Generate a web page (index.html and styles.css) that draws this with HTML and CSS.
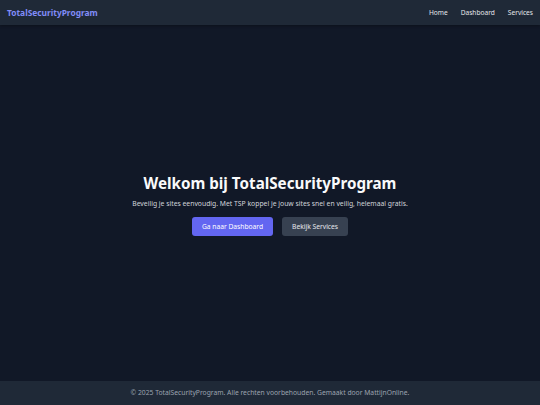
FILE: index.html
```html
<!DOCTYPE html>
<html lang="nl">
<head>
  <meta charset="UTF-8" />
  <meta name="viewport" content="width=device-width, initial-scale=1.0"/>
  <title>TotalSecurityProgram</title>
  <link rel="stylesheet" href="styles.css">
</head>
<body>

  <header class="topbar">
    <a class="brand" href="index.html">TotalSecurityProgram</a>
    <nav class="nav">
      <a href="index.html">Home</a>
      <a href="dashboard.html">Dashboard</a>
      <a href="services.html">Services</a>
    </nav>
  </header>

  <main class="hero">
    <h1>Welkom bij TotalSecurityProgram</h1>
    <p>Beveilig je sites eenvoudig. Met TSP koppel je jouw sites snel en veilig, helemaal gratis.</p>
    <div class="actions">
      <a class="btn primary" href="dashboard.html">Ga naar Dashboard</a>
      <a class="btn secondary" href="services.html">Bekijk Services</a>
    </div>
  </main>

  <footer class="footer">
    &copy; 2025 TotalSecurityProgram. Alle rechten voorbehouden. Gemaakt door MattijnOnline.
  </footer>

</body>
</html>
```

FILE: styles.css
```css
html, body {
  height: 100%;
}
body {
  margin: 0;
  font-family: "Noto Sans", sans-serif;
  background: #111827;
  color: #f3f4f6;
  display: flex;
  flex-direction: column;
}
a {
  text-decoration: none;
  color: inherit;
}
.topbar {
  background: #1f2937;
  height: 25px;
  display: flex;
  align-items: center;
  justify-content: space-between;
  padding: 0 7px;
  box-shadow: 0 1px 3px rgba(0,0,0,0.3);
}
.brand {
  font-size: 8.4px;
  font-weight: bold;
  color: #818cf8;
}
.nav {
  display: flex;
  gap: 13px;
}
.nav a {
  font-size: 6.6px;
  color: #e5e7eb;
}
.hero {
  flex: 1;
  display: flex;
  flex-direction: column;
  align-items: center;
  justify-content: center;
  text-align: center;
  padding-top: 3px;
}
.hero h1 {
  margin: 0;
  font-size: 15.2px;
  font-weight: bold;
  color: #f9fafb;
}
.hero p {
  margin: 6px 0 0;
  font-size: 6.8px;
  color: #d1d5db;
}
.actions {
  display: flex;
  gap: 9px;
  margin-top: 9px;
}
.btn {
  font-size: 6.7px;
  padding: 0 10px;
  height: 19px;
  line-height: 19px;
  border-radius: 3px;
}
.primary {
  background: #6366f1;
  color: #fff;
}
.secondary {
  background: #374151;
  color: #e5e7eb;
}
.footer {
  background: #1f2937;
  height: 24px;
  line-height: 24px;
  text-align: center;
  font-size: 6.75px;
  color: #9ca3af;
}
```
